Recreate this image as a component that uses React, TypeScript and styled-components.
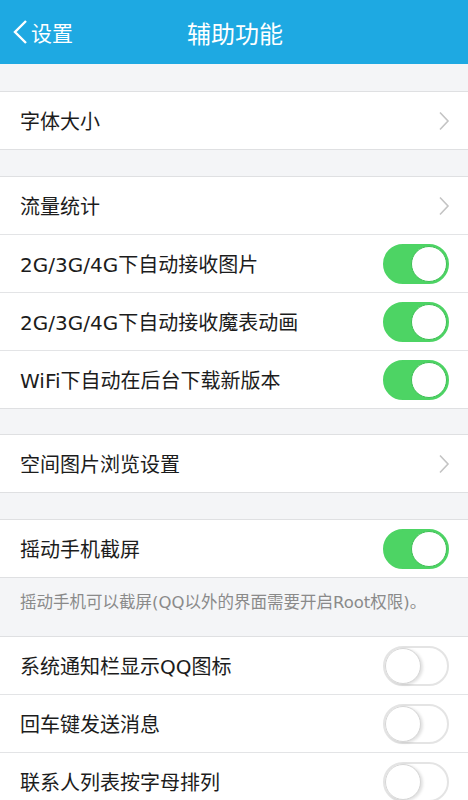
import styled, { createGlobalStyle } from 'styled-components';

const GlobalStyle = createGlobalStyle`
  html, body {
    margin: 0;
    padding: 0;
    background: #f4f5f7;
    font-family: "DejaVu Sans", "Noto Sans CJK SC", sans-serif;
  }
`;

const Page = styled.div`
  width: 468px;
  min-height: 800px;
  background: #f4f5f7;
  overflow: hidden;
`;

const NavBar = styled.div`
  height: 64px;
  background: #1ea9e2;
  display: flex;
  align-items: center;
  position: relative;
  color: #fff;
`;

const BackButton = styled.div`
  display: flex;
  align-items: center;
  padding-left: 11px;
  font-size: 21px;
  gap: 2px;
  z-index: 1;
`;

const NavTitle = styled.div`
  position: absolute;
  left: 0;
  right: 0;
  text-align: center;
  font-size: 24px;
  padding-left: 2px;
`;

const Section = styled.div<{ $gap?: number }>`
  margin-top: ${(p) => p.$gap ?? 26}px;
  background: #fff;
  border-top: 1px solid #dfe0e2;
  border-bottom: 1px solid #dfe0e2;
`;

const Row = styled.div`
  height: 57px;
  display: flex;
  align-items: center;
  justify-content: space-between;
  padding: 0 20px;
  font-size: 20px;
  color: #1c1c1c;

  & + & {
    border-top: 1px solid #e3e4e6;
  }
`;

const Footnote = styled.div`
  height: 58px;
  padding: 11px 20px 0;
  box-sizing: border-box;
  font-size: 16.5px;
  color: #8a8a8a;
  white-space: nowrap;
`;

const Switch = styled.div<{ $on: boolean }>`
  width: 66px;
  height: 40px;
  box-sizing: border-box;
  border-radius: 20px;
  display: flex;
  align-items: center;
  justify-content: ${(p) => (p.$on ? 'flex-end' : 'flex-start')};
  background: ${(p) => (p.$on ? '#4dd464' : '#fff')};
  border: 2px solid ${(p) => (p.$on ? '#4dd464' : '#e4e4e4')};
  margin-right: -1px;
`;

const Knob = styled.div<{ $on: boolean }>`
  width: 36px;
  height: 36px;
  box-sizing: border-box;
  border-radius: 50%;
  background: #fff;
  border: 1px solid ${(p) => (p.$on ? '#3fbf55' : '#d6d6d6')};
  box-shadow: ${(p) => (p.$on ? 'none' : '2px 1px 3px rgba(0,0,0,0.12)')};
`;

const Chevron = () => (
  <svg width="12" height="20" viewBox="0 0 12 20" style={{ marginRight: -2 }}>
    <path d="M2 1.5 L10 10 L2 18.5" fill="none" stroke="#c4c4c4" strokeWidth="1.6" />
  </svg>
);

const Toggle = ({ on }: { on: boolean }) => (
  <Switch $on={on}>
    <Knob $on={on} />
  </Switch>
);

export default function App() {
  return (
    <Page>
      <GlobalStyle />
      <NavBar>
        <BackButton>
          <svg width="18" height="28" viewBox="0 0 18 28">
            <path d="M15 3 L4 14 L15 25" fill="none" stroke="#fff" strokeWidth="2.4" />
          </svg>
          设置
        </BackButton>
        <NavTitle>辅助功能</NavTitle>
      </NavBar>

      <Section $gap={27}>
        <Row>
          字体大小
          <Chevron />
        </Row>
      </Section>

      <Section>
        <Row>
          流量统计
          <Chevron />
        </Row>
        <Row>
          2G/3G/4G下自动接收图片
          <Toggle on />
        </Row>
        <Row>
          2G/3G/4G下自动接收魔表动画
          <Toggle on />
        </Row>
        <Row>
          WiFi下自动在后台下载新版本
          <Toggle on />
        </Row>
      </Section>

      <Section $gap={25}>
        <Row>
          空间图片浏览设置
          <Chevron />
        </Row>
      </Section>

      <Section>
        <Row>
          摇动手机截屏
          <Toggle on />
        </Row>
      </Section>
      <Footnote>摇动手机可以截屏(QQ以外的界面需要开启Root权限)。</Footnote>

      <Section $gap={0}>
        <Row>
          系统通知栏显示QQ图标
          <Toggle on={false} />
        </Row>
        <Row>
          回车键发送消息
          <Toggle on={false} />
        </Row>
        <Row>
          联系人列表按字母排列
          <Toggle on={false} />
        </Row>
      </Section>
    </Page>
  );
}
